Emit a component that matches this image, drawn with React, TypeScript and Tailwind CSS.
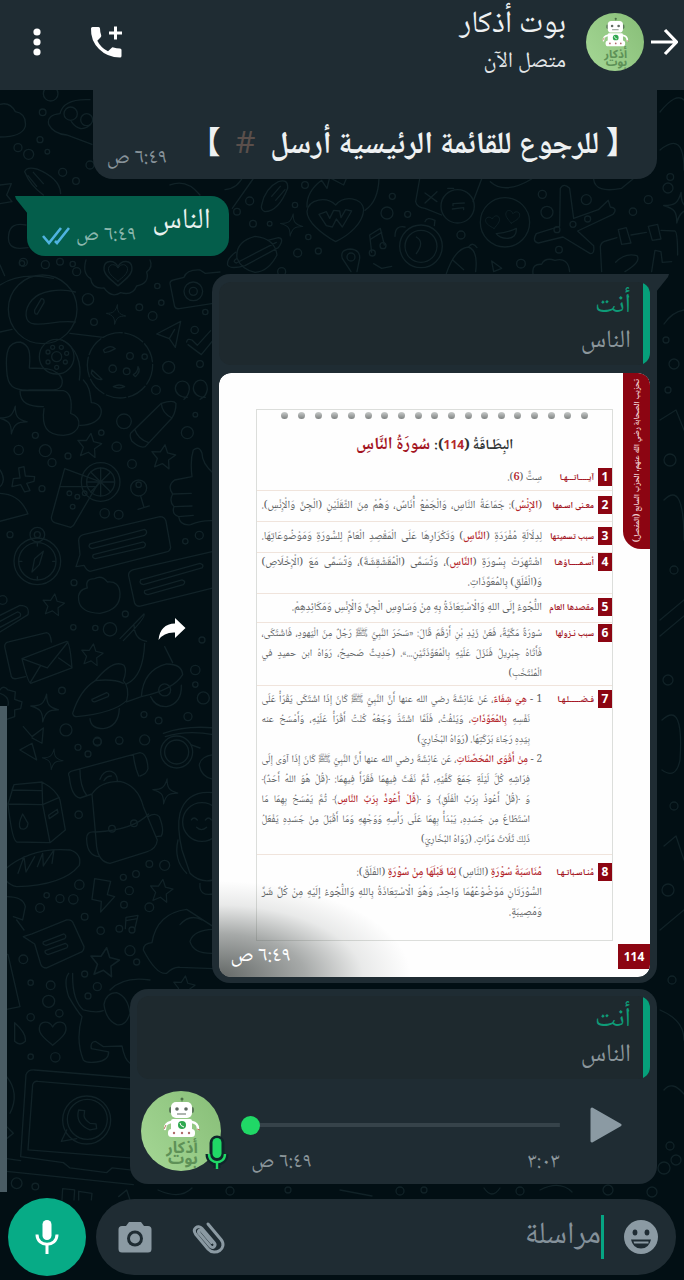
import type { ReactNode } from "react";

const STAR4 = "M0-42 C4-12 12-4 42 0 C12 4 4 12 0 42 C-4 12 -12 4 -42 0 C-12-4 -4-12 0-42Z";
const STAR5 = "M0-36 L11-13 L36-10 L17 8 L22 34 L0 21 L-22 34 L-17 8 L-36-10 L-11-13Z";
const HEART = "M0 34 C-22 16 -40 2 -38-16 C-36-36 -10-38 0-18 C10-38 36-36 38-16 C40 2 22 16 0 34Z";

type Spot = [number, number, number];

function Dots({ spots }: { spots: Spot[] }) {
  return (
    <>
      {spots.map(([x, y, r]) => (
        <circle key={`${x}-${y}`} cx={x} cy={y} r={r} />
      ))}
    </>
  );
}

function Shapes({ d, spots }: { d: string; spots: Spot[] }) {
  return (
    <>
      {spots.map(([x, y, s]) => (
        <path key={`${x}-${y}`} d={d} transform={`translate(${x} ${y}) scale(${s}) rotate(8)`} />
      ))}
    </>
  );
}

function Wallpaper() {
  return (
    <svg
      aria-hidden="true"
      className="absolute inset-0 h-full w-full"
      viewBox="0 0 684 1280"
      preserveAspectRatio="xMidYMin slice"
      fill="none"
      stroke="#112227"
      strokeWidth="4"
      strokeLinecap="round"
      strokeLinejoin="round"
    >
      <g transform="translate(0 260) scale(.3333)">
        <circle cx="128" cy="148" r="103" />
        <path d="M226 96 C180 84 120 92 96 120 C70 150 72 190 104 192 C140 196 170 180 226 186M104 150 L124 116 Q134 116 132 128 L112 162 Q102 164 104 150" />
        <path d="M60 246 C24 246 16 276 20 330 C22 380 40 392 90 390 L160 390 C196 388 192 352 170 338 C150 322 120 326 88 324 C92 280 90 254 60 246M186 240 C230 262 246 310 238 360M60 392 C60 432 90 440 130 440 M60 392 L190 392 C214 398 216 430 212 460 C250 470 246 524 190 526 C140 526 124 500 132 446M250 360 C270 380 270 400 274 428 C320 430 316 496 240 496" />
        <circle cx="170" cy="290" r="52" />
        <circle cx="170" cy="290" r="15" />
        <path d="M0 216 L36 208M210 220 L310 232" />
        <circle cx="360" cy="316" r="98" strokeDasharray="60 8" />
        <path d="M310 270 Q330 252 346 266 Q330 276 314 278ZM276 330 L306 358 Q290 362 274 340ZM340 380 Q358 370 374 380 Q358 388 340 380M414 320 Q424 334 406 350 L400 344Q414 336 414 320" />
        <circle cx="390" cy="288" r="10" />
        <circle cx="338" cy="326" r="11" />
        <circle cx="380" cy="334" r="10" />
        <circle cx="434" cy="290" r="8" />
        <path d="M258 0 Q246 40 272 56 Q276 88 312 84 Q334 116 362 98 Q398 108 410 78 Q450 70 440 36 Q460 20 450 0" />
        <path d={HEART} transform="translate(354 40) scale(1.1)" />
        <path d={HEART} transform="translate(354 38) scale(.75)" />
        <path d="M510 70 Q510 62 520 60 L552 52 Q560 28 600 30 L616 40 L660 36M510 70 L524 140 Q528 148 538 146 L640 130" />
        <circle cx="580" cy="94" r="28" />
        <circle cx="580" cy="94" r="12" />
        <path d="M470 222 L542 184 L526 262 L508 236Z M508 236 L524 208M560 246 Q562 234 576 240 L592 256 L632 212M564 254 L604 284 L640 240" />
        <path d="M562 412 C540 412 526 400 526 384 C528 356 570 356 568 388 C566 404 562 410 552 418M616 412 C594 412 580 400 580 384 C582 352 624 352 622 388 C620 404 614 412 600 418" />
        <path d="M392 520 L484 430 Q520 418 528 430 Q528 456 516 474 L436 560 Q420 566 396 544 Q388 530 392 520M484 430 Q486 460 516 474M404 508 Q414 538 446 548" />
        <path d="M194 626 L154 772 Q154 784 164 788 L212 802 Q222 798 224 790 L298 664ZM182 680 L290 680" />
        <circle cx="302" cy="666" r="58" />
        <circle cx="302" cy="666" r="42" />
        <path d="M302 624V708M260 666H344M272 636L332 696M332 636L272 696" />
        <circle cx="416" cy="684" r="24" />
        <path d="M422 708 L432 742M414 748 L448 738" />
        <path d="M640 640 Q606 610 606 580 Q598 556 580 570 Q570 600 576 650 L524 660 Q500 678 518 702 Q506 724 522 740 Q514 762 536 770 Q540 798 572 794 Q604 780 640 782M520 702 L574 700M522 740 L576 738M536 770 L580 766" />
        <path d="M40 656 L60 654 L56 624 L72 620 L76 648 L104 650 L102 664 L80 670 L90 692 L74 696 L62 674 L36 680ZM0 700 Q60 702 84 762 L0 784M0 630 Q20 660 0 680" />
        <circle cx="112" cy="904" r="70" />
        <circle cx="112" cy="904" r="56" />
        <circle cx="112" cy="824" r="22" />
        <circle cx="112" cy="824" r="9" />
        <path d="M130 874 L118 914 L96 936 L104 896ZM112 850V858M112 950V958M58 904H66M158 904H166" />
        <path d="M236 842 Q236 828 250 824 L480 770 Q494 770 498 784 L512 862 Q510 874 500 876 L270 934 Q260 932 252 916 L228 920 L240 884ZM270 852 L434 808 Q446 816 434 826 L276 866 Q262 862 270 852M280 884 L430 846 Q442 852 432 862 L286 896 Q274 894 280 884" />
        <path d="M640 874 L398 930 Q384 936 386 948 L404 1030 Q410 1042 424 1038 L640 984M422 960 L600 910 Q614 914 606 924 L430 974 Q416 970 422 960M434 992 L546 960 Q560 964 550 974 L444 1004 Q430 1002 434 992" />
        <path d="M262 984 Q254 956 284 956 Q306 944 322 966 Q358 962 360 1000 Q362 1050 300 1060 Q240 1058 236 1020 Q232 990 262 984" />
        <path d="M14 1160 Q14 1148 26 1146 L140 1118 Q152 1120 154 1146M14 1160 L34 1250 Q38 1258 50 1256 L76 1250M66 1196 L200 1144 Q210 1146 216 1224 L92 1270 Q84 1268 66 1196 L142 1224 L204 1146M92 1266 L122 1216M216 1222 L176 1194M0 1066 L60 1036 Q90 1036 84 1064 L0 1116M0 1084 L52 1056 Q66 1058 60 1070 L0 1102" />
        <path d="M218 1360 Q240 1290 286 1262 Q340 1196 372 1216 Q382 1230 370 1262 Q390 1284 380 1322 Q340 1360 230 1370 Q220 1370 218 1360M270 1376 Q272 1406 310 1406 Q356 1400 358 1346M276 1318 L320 1298 Q330 1302 324 1310 L284 1326 Q274 1324 276 1318M286 1262 Q340 1256 370 1270M380 1272 Q430 1250 434 1150M424 1310 Q430 1230 500 1212 Q546 1212 548 1244 Q520 1290 424 1310L380 1326M452 1310 Q466 1342 500 1340 Q546 1330 544 1276M494 1160 L518 1208M360 1136 L432 1062 Q440 1070 370 1142M402 1096 Q404 1140 440 1144" />
        <circle cx="494" cy="1290" r="18" />
        <path d="M0 1290 Q10 1274 24 1290 L46 1296 L44 1318 L66 1326 L62 1346 L44 1350 L44 1370 L20 1378 M0 1300 Q30 1310 24 1336" />
        <path d="M490 1420 Q560 1396 640 1404M496 1430 Q560 1410 640 1424M70 1400 L96 1430 L130 1404 L126 1450 L96 1434M96 1450 L60 1470 L110 1500Z" />
        <Shapes d={STAR4} spots={[[348, 164, 0.7], [40, 480, 1], [134, 1344, 1]]} />
        <Shapes d={STAR5} spots={[[268, 556, 1], [490, 590, 1], [160, 1034, 0.9], [276, 1184, 0.9]]} />
        <Dots spots={[[136, 14, 12], [66, 10, 8], [218, 12, 8], [264, 118, 17], [282, 186, 10], [418, 142, 10], [458, 168, 13], [484, 128, 8], [472, 78, 8], [616, 156, 8], [584, 210, 11], [600, 312, 10], [506, 322, 18], [468, 390, 13], [372, 484, 22], [562, 518, 18], [586, 464, 7], [350, 560, 14], [396, 612, 13], [56, 570, 14], [136, 572, 18], [106, 526, 9], [156, 608, 12], [204, 588, 9], [304, 518, 8], [126, 686, 9], [314, 760, 14], [356, 764, 13], [30, 824, 9], [598, 826, 12], [556, 844, 8], [222, 968, 9], [330, 1108, 20], [220, 1102, 8], [286, 1104, 8], [376, 1062, 9], [586, 1230, 14], [586, 1274, 8], [610, 1314, 18], [606, 1140, 9], [186, 1292, 10], [198, 1410, 18], [292, 1444, 12], [358, 1442, 11], [432, 1364, 9], [476, 1382, 10], [434, 1440, 15], [564, 1370, 12], [8, 1020, 13], [416, 674, 8], [208, 700, 7], [232, 710, 7], [254, 700, 7], [218, 740, 7], [144, 276, 6], [158, 262, 6], [184, 262, 6], [200, 280, 6], [196, 306, 6], [170, 322, 6], [144, 306, 6]]} />
      </g>

      <g transform="translate(0 740) scale(.3333)">
        <path d="M24 192 L42 134 L126 126 Q170 150 180 180 L196 270 L150 308 L50 306 Q36 300 24 192 L128 194 L150 308M128 194 L178 172M42 134 L36 150 L126 152M128 194 L126 126M68 222 Q52 254 62 266 Q82 272 84 250ZM146 226 L172 208 L174 218 L148 236Z" />
        <path d="M208 110 Q200 96 220 92 L420 38 Q442 40 444 86 Q440 102 420 108M208 110 Q214 170 240 174 L276 162M240 90 Q240 140 260 166M400 44 Q404 80 416 108M276 162 Q300 124 360 124 Q414 136 430 200 L472 300 Q470 326 440 336 L330 370 Q296 366 290 320ZM288 276 Q400 270 446 222M300 118 Q310 90 334 94 Q352 100 352 122M312 122 Q320 108 334 108M286 276 Q258 272 260 300 Q262 346 296 350M444 230 Q466 216 478 230 Q494 270 484 288 L468 290" />
        <path d="M10 392 Q90 320 210 330 Q246 342 238 376 Q190 436 50 440 Q10 430 10 392M54 400 L72 350 L78 396 L104 350 M112 380 L128 340 L130 378 L162 330 L156 370" />
        <path d="M284 416 L332 424 L322 464 L344 470 L302 516 L304 484 L276 478ZM376 566 L378 532 L414 526 L404 568M378 542 L412 536" />
        <circle cx="358" cy="566" r="10" />
        <circle cx="396" cy="570" r="9" />
        <path d="M70 590 L96 582 L200 540 Q216 538 220 550 L252 620 Q252 634 240 638 L140 684 Q126 684 122 672 L104 612ZM130 606 L192 582 Q202 588 194 596 L138 616 Q126 614 130 606M136 632 L196 610 Q208 616 200 624 L144 644 Q132 640 136 632" />
        <path d="M206 700 Q190 720 206 770 Q230 812 246 830 Q226 900 250 960 Q260 970 290 966 Q326 962 326 936 L274 926 Q270 906 286 904 L310 920 L366 918 Q374 960 390 970M218 700 Q216 780 250 810 Q290 820 310 812M330 750 Q370 708 450 720M312 794 Q318 758 350 758 Q384 770 390 820 Q378 860 350 854 Q318 840 312 794" />
        <path d="M430 630 Q430 610 456 608 Q470 520 560 508 L640 560M430 630 Q470 706 500 700 Q520 680 540 682 L640 686M540 554 Q570 520 606 540M640 568 Q580 570 570 604 Q580 642 640 640" />
        <circle cx="606" cy="246" r="58" />
        <path d="M640 158 Q560 150 540 220 Q530 260 546 330 L570 400 Q600 430 640 420M534 300 Q520 360 560 400M574 240 Q582 228 592 240M616 240 Q626 228 634 240M590 262 Q604 276 620 262M600 430 Q596 470 640 462" />
        <circle cx="530" cy="36" r="48" />
        <circle cx="530" cy="36" r="36" />
        <path d="M572 14 L600 24M640 44 Q600 50 598 76 Q604 112 640 118" />
        <path d="M62 1250 L78 1004 Q84 988 104 990 L400 1014M62 1250 L190 1268 L210 1284 L320 1298 L336 1284 L390 1290M84 1230 L98 1034 Q102 1022 114 1024 L400 1048M84 1230 L390 1254M20 1256 L62 1262M20 1294 L400 1334 M0 636 L24 644 L60 800 L20 808M20 470 Q70 470 76 500 L68 540 L40 530M50 540 L72 570M44 848 Q80 880 76 904 Q60 920 44 904Z" />
        <circle cx="260" cy="1140" r="72" />
        <circle cx="262" cy="1138" r="60" />
        <path d="M184 1204 L200 1170M184 1204 L230 1196M236 1110 Q224 1150 270 1170 L290 1166 L288 1152 L270 1150 Q254 1140 252 1128 L254 1112Z" />
        <path d="M186 1380 L188 1346 L224 1350 L222 1380M236 1380 L236 1354 L276 1360 L274 1380M356 1370 L380 1350 L390 1380M20 1010 Q60 1060 30 1120M20 1160 L40 1180 L20 1196" />
        <path d={HEART} transform="translate(158 880) scale(1.05)" />
        <Shapes d={STAR4} spots={[[496, 154, 0.9], [158, 58, 0.75]]} />
        <Shapes d={STAR5} spots={[[314, 666, 1.2], [484, 452, 0.95], [552, 740, 0.9]]} />
        <Dots spots={[[234, 22, 9], [264, 42, 9], [292, 6, 12], [236, 224, 11], [448, 372, 10], [494, 376, 15], [408, 402, 10], [370, 412, 9], [388, 452, 12], [372, 494, 10], [448, 502, 13], [238, 434, 14], [220, 478, 14], [180, 476, 12], [140, 466, 8], [120, 504, 13], [254, 530, 10], [302, 572, 11], [390, 632, 15], [410, 666, 9], [70, 658, 13], [254, 702, 9], [292, 740, 12], [264, 768, 9], [152, 736, 13], [146, 784, 18], [92, 728, 8], [92, 832, 11], [178, 820, 11], [92, 950, 8], [166, 952, 14], [50, 1330, 16], [106, 1340, 10], [336, 266, 10], [402, 250, 10]]} />
      </g>

      <g transform="translate(225 175) scale(.3333)">
        <path d="M0 44 Q40 40 56 0M84 12 L22 100M110 90 Q120 40 160 20 Q190 10 188 40 Q160 110 120 110 Q106 104 110 90M140 64 L166 34M152 76 L180 44" />
        <path d="M332 200 C290 176 246 140 246 110 C250 70 306 64 332 90 C356 60 412 66 416 104 C414 144 374 180 332 200Z" />
        <path d="M282 118 L304 110 L314 130 L326 106 L344 108 L348 128 L362 104 L380 108 L352 156 L334 132 L322 156 L304 152ZM246 96 Q244 50 290 16 L306 40 L314 8 L356 30 L366 6 M462 10 Q460 80 420 106" />
        <path d="M36 250 Q30 200 90 184 Q150 190 156 240 Q130 290 90 292 Q50 284 36 250M32 232 Q4 252 8 270 Q16 284 60 272 L160 218 Q180 190 160 188 L128 196M36 250 Q20 260 34 264 L154 202" />
        <path d="M378 290 L352 250 Q344 224 376 222 Q406 224 404 250 L396 290M440 232 L434 180 L466 160 L478 210M438 192 L470 172" />
        <circle cx="378" cy="246" r="12" />
        <circle cx="442" cy="234" r="9" />
        <circle cx="474" cy="212" r="9" />
        <circle cx="588" cy="214" r="64" />
        <circle cx="588" cy="214" r="48" />
        <path d="M574 186 Q600 200 574 236M510 184 Q510 150 540 156M600 140 Q606 124 630 136 L628 152" />
        <path d="M584 12 L572 80 Q576 98 600 100 L650 120M770 12 L744 80M600 54 L636 80M636 50 L600 84M668 40H686" />
        <circle cx="698" cy="94" r="50" />
        <path d="M684 86 L718 84M682 102 L716 98M684 86V92M716 98V104" />
        <path d="M664 296 Q690 220 730 216 Q760 226 752 290M684 256 L716 284M732 214 Q744 200 756 218M796 20 Q840 60 920 12" />
        <circle cx="840" cy="142" r="74" />
        <path d={HEART} transform="translate(804 142) scale(.55) rotate(-10)" />
        <path d={HEART} transform="translate(862 126) scale(.55) rotate(10)" />
        <path d="M814 176 Q850 172 874 160 Q876 190 846 190 Q824 190 814 176" />
        <path d="M1006 40 Q1016 22 1034 40 L1046 130 L1120 104 L1150 76 L1156 96 Q1180 100 1164 118 L1058 168 L1106 212 Q1110 236 1096 236 L1014 186 L940 204 Q920 200 934 176 L1004 154ZM1106 12 Q1110 56 1190 40 L1224 12" />
        <path d="M924 296 Q920 266 950 268 Q960 246 990 256 Q1030 246 1034 290M1130 290 L1126 214 Q1130 200 1142 198 L1176 188M1218 180 L1264 172M1308 166 L1350 168 Q1358 172 1358 240M1180 164 L1204 158 L1218 204 L1190 208ZM1270 154 L1298 148 L1308 192 L1282 196ZM1172 262 Q1200 232 1236 242 Q1250 260 1200 290M1280 290 L1290 226 L1308 230 L1312 262 L1340 260" />
        <path d="M446 266 L470 280 L500 274M800 258 L830 280 L806 290Z" />
        <Shapes d={STAR4} spots={[[200, 150, 0.8], [1362, 98, 1.1]]} />
        <Dots spots={[[240, 30, 10], [74, 78, 12], [210, 90, 8], [36, 110, 10], [84, 146, 10], [134, 146, 7], [250, 186, 8], [218, 234, 12], [280, 228, 9], [486, 114, 18], [548, 118, 9], [502, 64, 9], [708, 180, 12], [952, 58, 12], [966, 112, 18], [1084, 74, 15], [1224, 110, 11], [1270, 74, 12], [1002, 224, 10], [888, 266, 13], [1044, 148, 9], [1088, 132, 9], [996, 164, 9], [1336, 6, 10], [170, 290, 12]]} />
      </g>

      <g transform="translate(0 85) scale(.3333)">
        <path d="M0 58 Q30 50 46 80 Q80 86 76 124 Q66 156 0 156M146 118 Q140 90 180 86 Q190 40 270 44M146 118 Q160 146 200 150 L276 178M214 110 Q240 146 270 120" />
        <circle cx="212" cy="86" r="20" />
        <circle cx="260" cy="104" r="18" />
        <path d="M74 260 Q80 244 110 252 Q180 280 182 326M74 260 Q90 300 130 330M100 262 L130 296M84 272 L110 304M0 300 L34 296 L20 330 L36 350 L0 356M78 420 Q30 410 26 450 Q20 490 60 490 L84 488" />
        <path d="M0 540 L14 572M0 600 Q60 560 160 580M510 300 Q560 280 600 330" />
        <Dots spots={[[152, 26, 22], [128, 82, 10], [54, 188, 12], [120, 164, 9], [86, 208, 15], [142, 200, 7], [188, 262, 12], [228, 288, 10], [270, 240, 12], [70, 532, 12], [180, 530, 10], [230, 560, 12]]} />
      </g>

      <g strokeWidth="1.3">
        <path d="M660 112 Q676 92 684 100M660 150 Q684 130 684 170M664 324 Q672 312 684 310M660 420 L676 410 L684 430M664 500 Q684 480 684 540M660 620 L684 600M660 636 L684 616M662 720 Q684 700 680 760 Q676 780 662 770M664 846 L676 836 L684 860M660 1010 Q684 1020 684 1040M664 1090 Q672 1080 684 1094M660 930 L684 910M158 1190 Q180 1200 192 1188M340 1190 L372 1196M484 1188 Q492 1200 500 1188M540 1190 Q560 1180 572 1192" />
        <Dots spots={[[668, 188, 5], [666, 340, 3], [674, 364, 5], [668, 390, 3], [670, 460, 6], [674, 570, 4], [668, 680, 5], [674, 806, 4], [668, 890, 6], [672, 980, 4], [670, 1146, 4], [676, 1160, 5], [664, 1168, 6], [230, 1191, 4], [288, 1190, 3], [400, 1191, 4], [424, 1190, 3], [520, 1191, 4], [608, 1190, 5], [652, 1192, 5]]} />
      </g>
    </svg>
  );
}

function BotAvatar({ className }: { className: string }) {
  return (
    <svg viewBox="0 0 80 80" className={className} role="img" aria-label="بوت أذكار">
      <defs>
        <linearGradient id="avatar-green" x1="0" y1="1" x2="1" y2="0.3">
          <stop offset="0" stopColor="#a5d795" />
          <stop offset="1" stopColor="#8bc17b" />
        </linearGradient>
      </defs>
      <circle cx="40" cy="40" r="40" fill="url(#avatar-green)" />
      <path d="M41 12V8" stroke="#6d9c64" strokeWidth="1" />
      <circle cx="41" cy="8" r="1.5" fill="#4b6f47" />
      <rect x="28" y="16" width="4" height="6" rx="2" fill="#5b7a59" />
      <rect x="49" y="16" width="4" height="6" rx="2" fill="#5b7a59" />
      <rect x="30" y="11" width="21" height="16" rx="5" fill="#fff" />
      <circle cx="36" cy="18" r="1.8" fill="#5f6a62" />
      <circle cx="45" cy="18" r="1.8" fill="#5f6a62" />
      <path d="M36 23h9" stroke="#9aa39b" strokeWidth="1.6" />
      <path d="M30 31 Q24 32 24 38M51 31 Q57 32 57 38" stroke="#fff" strokeWidth="2.4" fill="none" strokeLinecap="round" />
      <path d="M23 38l2-4M56 38l3 1" stroke="#b9785f" strokeWidth="1" />
      <rect x="30" y="28" width="21" height="13" rx="2" fill="#fff" />
      <circle cx="41" cy="34" r="4" fill="#2fa84f" />
      <path d="M39 32q0 3 4 4" stroke="#fff" strokeWidth="1" fill="none" />
      <rect x="27" y="38" width="27" height="8" rx="3.5" fill="#fff" />
      <circle cx="33" cy="42" r="1.2" fill="#b06a6a" />
      <circle cx="41" cy="42" r="1.2" fill="#b06a6a" />
      <circle cx="48" cy="42" r="1.2" fill="#b06a6a" />
      <g fill="#5e9157" textAnchor="middle" className="font-['Noto_Sans_Arabic','Noto_Sans',sans-serif] text-[16px] font-bold">
        <text x="41" y="62">أذكار</text>
        <text x="42" y="73">بوت</text>
      </g>
    </svg>
  );
}

function MicIcon({ className }: { className: string }) {
  return (
    <svg viewBox="0 0 24 34" className={className} aria-hidden="true">
      <rect x="7.5" y="0" width="9" height="20" rx="4.5" fill="currentColor" />
      <path d="M2 14.5c0 13 20 13 20 0M12 25v9" fill="none" stroke="currentColor" strokeWidth="3" />
    </svg>
  );
}

function Quote() {
  return (
    <blockquote className="flex h-[83px] overflow-hidden rounded-xl bg-[#1e292e]">
      <div className="w-[7px] shrink-0 bg-[#06a07a]" />
      <div className="flex-1 pt-2 pr-3">
        <p className="text-[27px] leading-8 text-[#0e9c78]">أنت</p>
        <p className="text-[25px] leading-10 text-[#8b969b]">الناس</p>
      </div>
    </blockquote>
  );
}

function Red({ children }: { children: ReactNode }) {
  return <b className="font-semibold text-[#b3262c]">{children}</b>;
}

interface Section {
  label: string;
  pad: string;
  dense?: boolean;
  lines: { text: ReactNode; full?: boolean; indent?: boolean }[];
}

const sections: Section[] = [
  { label: "آيـــــاتـــهـا", pad: "pt-2 pb-[2px]", lines: [{ text: <>سِتٌّ (<Red>6</Red>).</> }] },
  {
    label: "معـنى اسـمها",
    pad: "py-[5px]",
    lines: [{ text: <>(<Red>الإِنْسُ</Red>): جَمَاعَةُ النَّاسِ، وَالْجَمْعُ أُنَاسٌ، وَهُمْ مِنَ الثَّقَلَيْنِ (الْجِنِّ وَالْإِنْسِ).</>, full: true }],
  },
  {
    label: "سبب تسميتها",
    pad: "py-[5px]",
    lines: [{ text: <>لِدِلَالَةِ مُفْرَدَةِ (<Red>النَّاسِ</Red>) وَتَكْرَارِهَا عَلَى الْمَقْصِدِ الْعَامِّ لِلسُّورَةِ وَمَوْضُوعَاتِهَا.</>, full: true }],
  },
  {
    label: "أسـمـــــاؤهـا",
    pad: "py-0",
    lines: [
      { text: <>اشْتُهِرَتْ بِسُورَةِ (<Red>النَّاسِ</Red>)، وَتُسَمَّى (الْمُقَشْقِشَةَ)، وَتُسَمَّى مَعَ (الْإِخْلَاصِ)</>, full: true },
      { text: "وَ(الْفَلَقِ) بِالمُعَوِّذَاتِ." },
    ],
  },
  { label: "مقصدها العام", pad: "py-1", lines: [{ text: "اللُّجُوءُ إِلَى اللهِ وَالْاسْتِعَاذَةُ بِهِ مِنْ وَسَاوِسِ الْجِنِّ وَالْإِنْسِ وَمَكَائِدِهِمْ." }] },
  {
    label: "سبب نـزولها",
    pad: "py-[1px]",
    dense: true,
    lines: [
      { text: "سُورَةٌ مَكِّيَّةٌ، فَعَنْ زَيْدِ بْنِ أَرْقَمَ قَالَ: «سَحَرَ النَّبِيَّ ﷺ رَجُلٌ مِنَ الْيَهودِ، فَاشْتَكَى،", full: true },
      { text: "فَأَتَاهُ جِبْرِيلُ فَنَزَلَ عَلَيْهِ بِالْمُعَوِّذَتَيْنِ...». (حَدِيثٌ صَحيحٌ، رَوَاهُ ابن حميدٍ في", full: true },
      { text: "الْمُنْتَخَبِ)" },
    ],
  },
  {
    label: "فـضــــــلـهـا",
    pad: "py-1",
    dense: true,
    lines: [
      { text: <>1 - <Red>هِيَ شِفَاءٌ</Red>، عَنْ عَائِشَةَ رضي الله عنها أَنَّ النَّبِيَّ ﷺ كَانَ إِذَا اشْتَكَى يَقْرَأُ عَلَى</>, full: true },
      { text: <>نَفْسِهِ <Red>بِالمُعَوِّذَاتِ</Red>، وَيَنْفُثُ، فَلَمَّا اشْتَدَّ وَجَعُهُ كُنْتُ أَقْرَأُ عَلَيْهِ، وَأَمْسَحُ عنه</>, full: true, indent: true },
      { text: "بِيَدِهِ رَجَاءَ بَرَكَتِهَا. (رَوَاهُ البُخَارِيّ)", indent: true },
      { text: <>2 - <Red>مِنْ أَقْوَى المُحَصِّنَاتِ</Red>، عَن عَائِشَةَ رضي الله عنها أَنَّ النَّبِيَّ ﷺ كَانَ إِذَا آوَى إِلَى</>, full: true },
      { text: "فِرَاشِهِ كُلَّ لَيْلَةٍ جَمَعَ كَفَّيْهِ، ثُمَّ نَفَثَ فِيهِمَا فَقَرَأَ فِيهِمَا: ﴿قُلْ هُوَ اللهُ أَحَدٌ﴾", full: true, indent: true },
      { text: <>وَ ﴿قُلْ أَعُوذُ بِرَبِّ الْفَلَقِ﴾ وَ ﴿<Red>قُلْ أَعُوذُ بِرَبِّ النَّاسِ</Red>﴾ ثُمَّ يَمْسَحُ بِهِمَا مَا</>, full: true, indent: true },
      { text: "اسْتَطَاعَ مِن جَسَدِهِ، يَبْدَأُ بِهِمَا عَلَى رَأْسِهِ وَوَجْهِهِ وَمَا أَقْبَلَ مِنْ جَسَدِهِ يَفْعَلُ", full: true, indent: true },
      { text: "ذَلِكَ ثَلَاثَ مَرَّاتٍ. (رَوَاهُ البُخَارِيّ)", indent: true },
    ],
  },
  {
    label: "مُنـاسـباتـهـا",
    pad: "pt-2 pb-4",
    lines: [
      { text: <><Red>مُنَاسَبَةُ سُوْرَةِ</Red> (النَّاسِ) <Red>لِمَا قَبْلَهَا مِنْ سُوْرَةِ</Red> (الفَلَقْ):</> },
      { text: "السُّوْرَتَانِ مَوْضُوْعُهُمَا وَاحِدٌ، وَهُوَ الْاسْتِعَاذَةُ بِاللهِ وَاللُّجُوءُ إِلَيْهِ مِنْ كُلِّ شَرٍّ", full: true },
      { text: "وَمُصِيبَةٍ." },
    ],
  },
];

function SurahCard() {
  return (
    <div className="flex h-[604px] overflow-hidden rounded-xl bg-[#fefefe]">
      <div className="flex w-8 shrink-0 flex-col items-start justify-between pb-2">
        <div className="flex h-[176px] w-[27px] items-center justify-center rounded-bl-[18px] bg-[#8c0512]">
          <span className="rotate-180 text-[8px] leading-3 font-bold whitespace-nowrap text-[#f0cfd0] [writing-mode:vertical-rl]">
            تحزيب الصحابة رضي الله عنهم، الحزب السابع (المفصل)
          </span>
        </div>
        <div className="flex h-[25px] w-8 items-center justify-center bg-[#8c0512] font-['Open_Sans',sans-serif] text-[12px] font-bold text-white">114</div>
      </div>
      <div className="mt-9 mr-[5px] mb-9 ml-[37px] flex min-w-0 flex-1 flex-col border border-[#dcdedb]">
        <div className="flex justify-between px-6 pt-[2px]" aria-hidden="true">
          {Array.from({ length: 19 }, (_, i) => (
            <i key={i} className="size-[7px] rounded-full bg-linear-to-b from-[#c9cccb] to-[#7e8281]" />
          ))}
        </div>
        <h2 className="flex h-[41px] items-center justify-center gap-1 pt-3 text-[14px] leading-6 font-bold whitespace-nowrap text-[#2f3234]">
          <span>
            البِطَـاقَةُ (<span className="font-['Open_Sans',sans-serif] text-[12px] text-[#b3262c]">114</span>):
          </span>
          <span className="text-[17px] text-[#a3141f]">سُورَةُ النَّاسِ</span>
        </h2>
        <ol className="flex flex-col">
          {sections.map((section, index) => (
            <li key={section.label} className={`flex border-b border-[#f0e4dc] last:border-0 ${section.pad}`}>
              <span className="flex h-[18px] w-[14px] shrink-0 items-center justify-center bg-[#8c0512] font-['Open_Sans',sans-serif] text-[12px] font-bold text-white">
                {index + 1}
              </span>
              <span className="w-[56px] shrink-0 pr-1 text-[9px] leading-5 font-bold whitespace-nowrap text-[#a3141f]">
                {section.label}
              </span>
              <div className={`min-w-0 flex-1 pl-1 leading-5 text-[#5a5d5f] ${section.dense ? "text-[10px]" : "text-[11px]"}`}>
                {section.lines.map((line, i) => (
                  <p
                    key={i}
                    className={`whitespace-nowrap ${line.full ? "[text-align-last:justify]" : ""} ${line.indent ? "pr-3" : ""}`}
                  >
                    {line.text}
                  </p>
                ))}
              </div>
            </li>
          ))}
        </ol>
      </div>
    </div>
  );
}

export default function App() {
  return (
    <div
      dir="rtl"
      className="relative flex min-h-screen flex-col overflow-hidden bg-[#020f14] font-['Noto_Naskh_Arabic','Noto_Sans','Noto_Sans_CJK_SC',serif]"
    >
      <Wallpaper />

      <header className="relative flex h-[90px] items-start bg-[#1f2c33] pr-[5px] pl-7">
        <button type="button" aria-label="رجوع" className="flex h-[84px] w-[30px] items-center justify-center text-white">
          <svg viewBox="0 0 28 28" className="size-7 shrink-0" fill="none" stroke="currentColor" strokeWidth="3.2" aria-hidden="true">
            <path d="M1 14h25M15 2l11.500 12L15 26" />
          </svg>
        </button>
        <BotAvatar className="mt-[13px] mr-[5px] size-[58px] shrink-0" />
        <div className="mr-5 flex-1 pt-[6px]">
          <h1 className="text-[31px] leading-10 text-[#eef1f2]">بوت أذكار</h1>
          <p className="text-[22px] leading-8 text-[#e2e6e8]">متصل الآن</p>
        </div>
        <button type="button" aria-label="اتصال" className="ml-11 flex h-[84px] items-center text-white">
          <svg viewBox="0 0 34 34" className="size-[34px]" aria-hidden="true">
            <path
              d="M1 3.500Q1 2 2.500 2H8.500Q10 2 10 3.500Q10 7 11.200 10.300Q11.500 11.500 10.700 12.300L7.300 15.700Q11 23 18 26.300L21.500 22.900Q22.300 22 23.500 22.500Q26.500 23.500 30 23.600Q31.500 23.700 31.500 25V31Q31.500 32.500 30 32.500Q17.500 32.500 9 24T1 3.500Z"
              fill="currentColor"
            />
            <path d="M25.500 1.500v13M19 8h13" stroke="currentColor" strokeWidth="3" />
          </svg>
        </button>
        <button type="button" aria-label="المزيد من الخيارات" className="flex h-[84px] w-[18px] items-center justify-center text-white">
          <svg viewBox="0 0 8 28" className="h-7 w-2" fill="currentColor" aria-hidden="true">
            <circle cx="4" cy="4" r="3.600" />
            <circle cx="4" cy="14" r="3.600" />
            <circle cx="4" cy="24" r="3.600" />
          </svg>
        </button>
      </header>

      <main className="relative flex flex-1 flex-col">
        <article className="mr-[27px] flex h-[89px] w-[82.5%] items-end justify-between self-start rounded-b-[20px] bg-[#1f2c33] pr-5 pb-2 pl-[14px]">
          <p className="pb-1 text-[31px] leading-10 font-bold whitespace-nowrap text-[#eef1f2]">
            【 للرجوع للقائمة الرئيسية أرسل{" "}
            <span className="px-2 font-['Noto_Sans',sans-serif] font-normal text-[#5a4f4b]">#</span>
            {" "}】
          </p>
          <time className="text-[21px] leading-6 whitespace-nowrap text-[#87939a]">٦:٤٩ ص</time>
        </article>

        <article className="relative mt-[17px] ml-[27px] flex h-[60px] items-center self-end rounded-[18px] rounded-tl-none bg-[#045e4b] pr-[18px] pl-[15px]">
          <svg viewBox="0 0 13 18" className="absolute top-0 -left-3 h-[18px] w-[13px]" aria-hidden="true">
            <path d="M0 0H13V18L1 3Z" fill="#045e4b" />
          </svg>
          <p className="pb-2 text-[29px] leading-10 text-[#e9f1ef]">الناس</p>
          <time className="mr-4 pt-5 text-[21px] leading-6 text-[#8cb8ae]">٦:٤٩ ص</time>
          <svg viewBox="0 0 28 18" className="mt-5 mr-[6px] h-[18px] w-7" fill="none" stroke="#4fb3e0" strokeWidth="2.600" aria-label="مقروءة">
            <path d="M1 9l6 7L19 1M13 14l2 2L27 1" />
          </svg>
        </article>

        <div className="mt-[18px] flex items-center">
          <article className="relative mr-[27px] w-[65%] rounded-[18px] rounded-tr-none bg-[#1f2c33] px-[7px] pt-2 pb-[6px]">
            <svg viewBox="0 0 13 18" className="absolute top-0 -right-3 h-[18px] w-[13px]" aria-hidden="true">
              <path d="M13 0H0V18L12 3Z" fill="#1f2c33" />
            </svg>
            <Quote />
            <div className="relative mt-2 overflow-hidden rounded-xl">
              <SurahCard />
              <div
                className="absolute bottom-0 left-0 h-24 w-48 bg-[radial-gradient(ellipse_farthest-side_at_bottom_left,rgba(60,66,64,0.8),rgba(80,86,84,0.5)_45%,rgba(110,116,114,0.15)_75%,rgba(130,136,134,0))]"
                aria-hidden="true"
              />
              <time className="absolute bottom-2 left-[11px] text-[21px] leading-6 text-white">٦:٤٩ ص</time>
            </div>
          </article>
          <button type="button" aria-label="إعادة توجيه" className="mr-[26px] text-white">
            <svg viewBox="0 0 28 22" className="h-[22px] w-7" aria-hidden="true">
              <path d="M17 0L27.500 10L17 20V14.500Q6 14 0.500 22Q2 6 17 5.500Z" fill="currentColor" />
            </svg>
          </button>
        </div>

        <article className="mt-[6px] mr-[27px] h-[195px] w-[77%] self-start rounded-[18px] bg-[#1f2c33] px-[7px] pt-[7px]">
          <Quote />
          <div className="flex pt-3 pr-[28px] pl-1">
            <button type="button" aria-label="تشغيل" className="mt-4 flex h-9 w-8 shrink-0 text-[#8b9aa3]">
              <svg viewBox="0 0 32 36" className="h-9 w-8" aria-hidden="true">
                <path d="M2 2L30 18L2 34Z" fill="currentColor" stroke="currentColor" strokeWidth="3" strokeLinejoin="round" />
              </svg>
            </button>
            <div className="mr-[30px] min-w-0 flex-1 pt-6">
              <input
                type="range"
                dir="ltr"
                min={0}
                max={183}
                defaultValue={0}
                aria-label="موضع التشغيل"
                className="block h-5 w-full appearance-none bg-[linear-gradient(#36434a,#36434a)] bg-[length:100%_4px] bg-center bg-no-repeat [&::-webkit-slider-thumb]:size-[19px] [&::-webkit-slider-thumb]:appearance-none [&::-webkit-slider-thumb]:rounded-full [&::-webkit-slider-thumb]:bg-[#20d866]"
              />
              <div className="mt-4 flex justify-between pl-[10px] text-[21px] leading-6 text-[#8b969b]">
                <span>٣:٠٣</span>
                <time>٦:٤٩ ص</time>
              </div>
            </div>
            <div className="relative mr-5 size-20 shrink-0">
              <BotAvatar className="size-20" />
              <svg viewBox="0 0 24 36" className="absolute -right-2 bottom-0 h-9 w-6" aria-hidden="true">
                <g stroke="#10262a" strokeWidth="7" fill="none">
                  <rect x="8" y="4" width="8" height="18" rx="4" />
                  <path d="M4 19c0 11 16 11 16 0M12 27v6" />
                </g>
                <rect x="7.500" y="3" width="9" height="20" rx="4.500" fill="#20d866" />
                <path d="M4 19c0 11 16 11 16 0M12 27v7" fill="none" stroke="#20d866" strokeWidth="2.400" />
              </svg>
            </div>
          </div>
        </article>
      </main>

      <footer className="relative mt-[14px] flex items-center gap-[10px] pr-2 pb-1 pl-2">
        <div className="flex h-[76px] min-w-0 flex-1 items-center rounded-full bg-[#1f2c33] pr-[18px] pl-[22px] text-[#8b9aa3]">
          <button type="button" aria-label="رموز تعبيرية">
            <svg viewBox="0 0 34 34" className="size-[34px]" aria-hidden="true">
              <circle cx="17" cy="17" r="17" fill="currentColor" />
              <ellipse cx="11" cy="12.500" rx="2.400" ry="3" fill="#1f2c33" />
              <ellipse cx="23" cy="12.500" rx="2.400" ry="3" fill="#1f2c33" />
              <path d="M7 19.500H27Q25 28.500 17 28.500T7 19.500Z" fill="#1f2c33" />
              <path d="M9.500 21.500H24.500V23.500H10.200Z" fill="currentColor" />
            </svg>
          </button>
          <input
            type="text"
            placeholder="مراسلة"
            aria-label="مراسلة"
            className="mr-5 h-[44px] min-w-0 flex-1 border-r-[3px] border-[#06a583] bg-transparent text-[31px] leading-[44px] outline-none placeholder:text-[#84919a]"
          />
          <button type="button" aria-label="إرفاق ملف" className="ml-[38px]">
            <svg viewBox="0 0 36 36" className="size-9" fill="none" stroke="currentColor" strokeWidth="3" strokeLinecap="round" aria-hidden="true">
              <path d="M9 14L20.500 27.500C23 30.300 26.500 26.500 24.200 23.800L12 9.500C8 5 2 10 5.500 15L18 30C25 38 38 29 31 20.500L18 5" />
              <path d="M9 14C7.500 12 10 10 11.500 11.700L21.500 23.500" />
            </svg>
          </button>
          <button type="button" aria-label="الكاميرا">
            <svg viewBox="0 0 34 32" className="h-8 w-[34px]" aria-hidden="true">
              <path d="M11 1H23L26 5H30Q33.500 5 33.500 8.500V28Q33.500 31.500 30 31.500H4Q0.500 31.500 0.500 28V8.500Q0.500 5 4 5H8Z" fill="currentColor" />
              <circle cx="17" cy="17.500" r="8" fill="#1f2c33" />
              <circle cx="17" cy="17.500" r="5" fill="currentColor" />
            </svg>
          </button>
        </div>
        <button type="button" aria-label="تسجيل رسالة صوتية" className="flex size-[78px] shrink-0 items-center justify-center rounded-full bg-[#07ab86] text-white">
          <MicIcon className="h-[34px] w-6" />
        </button>
      </footer>

      <div className="absolute top-[706px] left-0 h-[486px] w-[7px] bg-[#4a5c64]" aria-hidden="true" />
    </div>
  );
}
